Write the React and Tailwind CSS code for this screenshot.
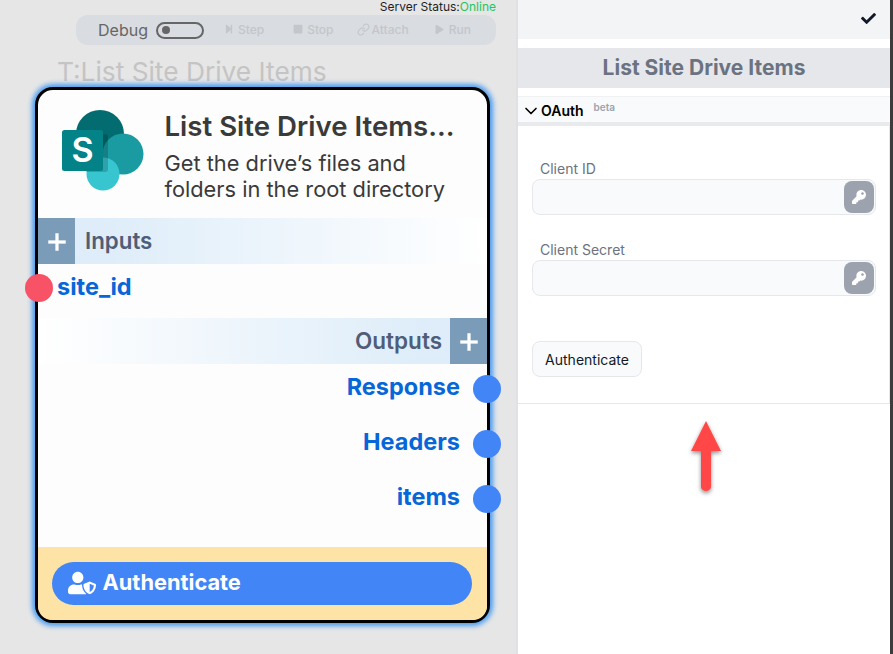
import React from "react";
import { FaCheck, FaKey, FaPlay, FaStop, FaStepForward, FaUserShield } from "react-icons/fa";
import { ChevronDown, Link, Plus } from "lucide-react";

function SharePointLogo() {
  return (
    <svg width="84" height="84" viewBox="0 0 84 84" className="shrink-0">
      <circle cx="38" cy="26" r="24" fill="#036c70" />
      <circle cx="61" cy="46" r="20.5" fill="#1a9ba1" />
      <circle cx="41" cy="66" r="16.5" fill="#37c6d0" />
      <path d="M17 26h26a3 3 0 0 1 3 3v32a3 3 0 0 1-3 3H24.5A16.5 16.5 0 0 1 17 50z" fill="#000" opacity="0.18" />
      <rect x="0" y="22" width="41" height="41" rx="2.5" fill="#038387" />
      <text x="20.5" y="53.5" textAnchor="middle" fontFamily="Inter, sans-serif" fontWeight="600" fontSize="34" fill="#fff">S</text>
    </svg>
  );
}

function ToolItem({ icon, label, className }) {
  return (
    <div className={`flex items-center text-xs font-medium text-[#c3c6cb] ${className}`}>
      <span className="mb-[2px] flex">{icon}</span>
      <span>{label}</span>
    </div>
  );
}

function OutputRow({ label }) {
  return (
    <div className="relative flex h-[55px] items-center justify-end pr-[27px] pb-[8px] text-[23.5px] leading-none font-bold text-[#0767d8]">
      {label}
      <span className="absolute top-[11px] right-[-14px] h-[28px] w-[28px] rounded-full bg-[#4285f7]" />
    </div>
  );
}

function PlusBox() {
  return (
    <div className="flex h-full w-[37px] items-center justify-center bg-[#7a9cb8] pt-[3px] text-white">
      <Plus size={30} strokeWidth={2.6} strokeLinecap="butt" />
    </div>
  );
}

function KeyField({ label }) {
  return (
    <div>
      <div className="pl-2 text-sm leading-5 text-[#6b7280]">{label}</div>
      <div className="flex h-[36px] items-center justify-end rounded-lg border border-[#e5e7eb] bg-[#f9fafb] pr-[1px]">
        <div className="flex h-[32px] w-[30px] items-center justify-center rounded-lg bg-[#9ca3af] text-white">
          <FaKey size={14} />
        </div>
      </div>
    </div>
  );
}

export default function App() {
  return (
    <div className="flex h-[654px] w-[893px] overflow-hidden bg-[#3c3c3c] font-['Inter',sans-serif]">
      <div className="flex w-[516px] shrink-0 flex-col bg-[#e6e6e6] pr-[20px]">
        <div className="h-[15px] text-right text-xs leading-[14px] text-[#1f1f1f]">
          Server Status:<span className="text-[#22c55e]">Online</span>
        </div>
        <div className="ml-[76px] flex h-[30px] items-center rounded-xl bg-[#d9dce0] pl-[22px]">
          <span className="text-base leading-none text-[#666666]">Debug</span>
          <div className="ml-[8px] flex h-[17px] w-[48px] items-center rounded-full border-2 border-[#666666] pl-[4px]">
            <span className="h-[8px] w-[8px] rounded-full bg-[#666666]" />
          </div>
          <ToolItem className="ml-[20px] gap-[4px]" icon={<FaStepForward size={10} />} label="Step" />
          <ToolItem className="ml-[29px] gap-[4px]" icon={<FaStop size={10} />} label="Stop" />
          <ToolItem className="ml-[23px] gap-[2px]" icon={<Link size={13} />} label="Attach" />
          <ToolItem className="ml-[26px] gap-[5px]" icon={<FaPlay size={9} />} label="Run" />
        </div>
        <div className="mt-[11px] ml-[57px] h-[31px] text-[26.3px] leading-[31px] text-[#c4c4c4]">T:List Site Drive Items</div>

        <div className="relative ml-[35px] flex h-[536px] w-[455px] flex-col rounded-[18px] border-[3.5px] border-black bg-[#fdfdfd] shadow-[0_0_5px_3px_#4a9cf0]">
          <div className="flex h-[128px] shrink-0 pl-[23.5px]">
            <div className="pt-[18px]"><SharePointLogo /></div>
            <div className="ml-[19px] pt-[20px]">
              <div className="text-[27.6px] leading-[32px] font-semibold whitespace-nowrap text-[#3a3a3a]">List Site Drive Items...</div>
              <div className="mt-[8px] text-[21.8px] leading-[26px] whitespace-nowrap text-[#3a3a3a]">Get the drive’s files and<br />folders in the root directory</div>
            </div>
          </div>

          <div className="flex h-[45.5px] shrink-0 items-center bg-gradient-to-r from-[#deedf9] from-15% to-white">
            <PlusBox />
            <span className="ml-[10px] text-[22.3px] leading-none font-semibold text-[#4f5d78]">Inputs</span>
          </div>

          <div className="relative flex h-[54.5px] shrink-0 items-start pt-[9px] pl-[19px] text-[23.5px] leading-[27px] font-bold text-[#0767d8]">
            site_id
            <span className="absolute top-[10.5px] left-[-13.5px] h-[28px] w-[28px] rounded-full bg-[#f85266]" />
          </div>

          <div className="flex h-[45.5px] shrink-0 items-center justify-end bg-gradient-to-l from-[#deedf9] from-15% to-white">
            <span className="mr-[8px] text-[22.5px] leading-none font-semibold text-[#4f5d78]">Outputs</span>
            <PlusBox />
          </div>

          <OutputRow label="Response" />
          <OutputRow label="Headers" />
          <OutputRow label="items" />

          <div className="mt-auto flex h-[73px] items-start rounded-b-[14px] bg-[#fde4a6] pt-[14.5px] pr-[15px] pl-[14px]">
            <div className="flex h-[43.5px] w-full items-center gap-[6.5px] rounded-full bg-[#4285f7] pl-[16px] text-[21.8px] leading-none font-bold text-white">
              <FaUserShield size={28} />
              <span>Authenticate</span>
            </div>
          </div>
        </div>
      </div>

      <div className="relative flex w-[374px] shrink-0 flex-col border-l-2 border-l-[#dfe1e4] bg-white">
        <div className="flex h-[39px] items-start justify-end bg-[#f3f4f6] pt-[11px] pr-[14px] text-[#111827]"><FaCheck size={15} /></div>
        <div className="mt-[9px] flex h-[40px] items-center justify-center bg-[#e5e7eb] text-[21px] font-bold text-[#6b7280]">List Site Drive Items</div>
        <div className="mt-[8px] flex h-[30px] items-center border-t border-b-[4px] border-[#e9eaee] border-t-[#f0f1f3] bg-[#f9fafb] pt-[3px] pl-[3px]">
          <ChevronDown size={20} strokeWidth={2} className="-mr-[1px] text-black" />
          <span className="ml-[1px] text-sm font-semibold text-black">OAuth</span>
          <span className="mb-[8px] ml-[10px] text-[10px] leading-none font-semibold text-[#9ca3af]">beta</span>
        </div>
        <div className="flex h-[278px] flex-col border-r border-b border-[#e5e7eb] pt-[33px] pr-[13px] pl-[14px]">
          <KeyField label="Client ID" />
          <div className="mt-[25px]"><KeyField label="Client Secret" /></div>
          <div className="mt-[45px] flex h-[36px] w-[110px] items-center justify-center rounded-lg border border-[#e5e7eb] bg-[#f9fafb] pt-[2px] text-sm text-[#111827]">Authenticate</div>
        </div>
        <svg width="44" height="84" viewBox="0 0 44 84" className="absolute top-[417px] left-[166px]">
          <defs>
            <filter id="arrowShadow" x="-40%" y="-20%" width="180%" height="150%">
              <feDropShadow dx="0" dy="2" stdDeviation="2" floodColor="#000" floodOpacity="0.45" />
            </filter>
          </defs>
          <path d="M22 4 L37 34 H27 V70 a5 4 0 0 1-10 0 V34 H7 Z" fill="#ff4747" filter="url(#arrowShadow)" />
        </svg>
      </div>
    </div>
  );
}
